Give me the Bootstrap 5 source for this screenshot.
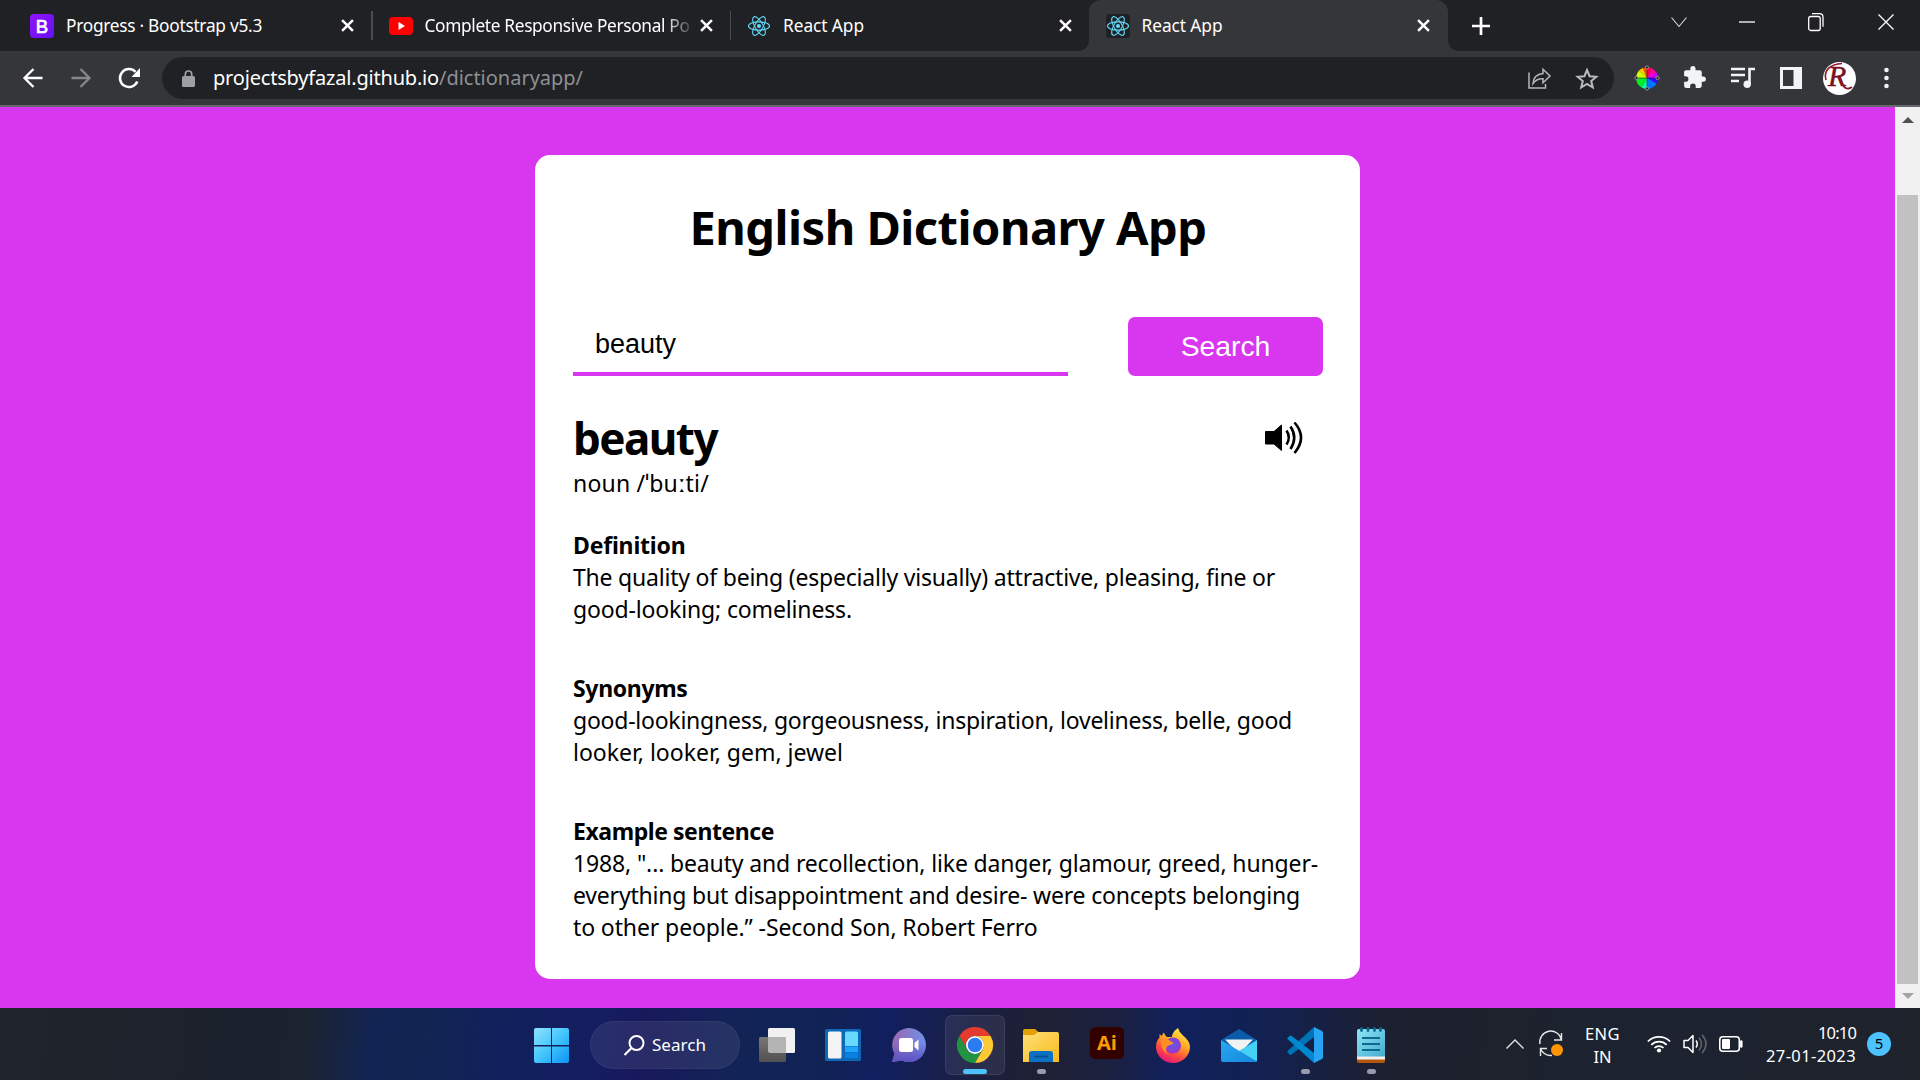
<!DOCTYPE html>
<html lang="en">
<head>
<meta charset="utf-8">
<meta name="viewport" content="width=device-width, initial-scale=1">
<title>React App</title>
<link href="https://cdn.jsdelivr.net/npm/bootstrap@5.3.0/dist/css/bootstrap.min.css" rel="stylesheet">
<style>
  :root { --pink: #d836ef; --ui: "Noto Sans", "Open Sans", sans-serif; }
  html, body { height: 100%; }
  body { font-family: var(--ui); color: #000; overflow: hidden; background: var(--pink); }
  svg { display: block; flex: none; overflow: visible; }
  .fit { display: inline-block; white-space: nowrap; }

  /* Browser chrome */
  .tabstrip { height: 51px; background: #202124; color: #fff; font-size: 17.3px; line-height: 51px; }
  .tab { height: 51px; flex: none; }
  .tab-sep { width: 1.5px; height: 29px; background: #4a4c50; flex: none; }
  .tab-active { background: #35363a; border-radius: 12px 12px 0 0; position: relative; }
  .tab-active::before, .tab-active::after { content: ""; position: absolute; bottom: 0; width: 10px; height: 10px; }
  .tab-active::before { left: -10px; background: radial-gradient(circle at 0 0, transparent 9.5px, #35363a 10px); }
  .tab-active::after { right: -10px; background: radial-gradient(circle at 100% 0, transparent 9.5px, #35363a 10px); }
  .tab-label { white-space: nowrap; }
  .fade-label { width: 274px; -webkit-mask-image: linear-gradient(90deg, #000 244px, transparent 274px); mask-image: linear-gradient(90deg, #000 244px, transparent 274px); }
  .toolbar { height: 56px; background: #35363a; border-bottom: 2px solid #67686c; }
  .omnibox { height: 42px; width: 1452px; margin-left: 22px; padding-left: 20px; padding-right: 16px; background: #202124; border-radius: 21px; font-size: 20px; line-height: 42px; color: #8d9095; }
  .omnibox .host { color: #fff; }

  /* Page */
  .viewport { height: 901px; }
  .scroller { width: 25px; background: #f1f1f1; }
  .thumb { width: 21px; height: 789px; background: #c1c1c1; }
  .page { padding-top: 48px; }
  .dict-card { width: 825px; height: 824px; border-radius: 15px; padding: 40px 37px 0 38px; background: #fff; }
  .app-title { font-size: 47px; font-weight: 700; line-height: 64px; margin-bottom: 58px; }
  .search-row { height: 59px; margin-bottom: 32px; }
  .word-input { width: 495px; border: 0; border-bottom: 4px solid var(--pink); padding: 0 0 0 22px; font: 27px "Liberation Sans", Arial, sans-serif; color: #000; outline: 0; background: transparent; }
  .search-btn { width: 195px; border-radius: 7px; background: var(--pink); color: #fff; font: 28.3px "Liberation Sans", Arial, sans-serif; }
  .word { font-size: 44px; font-weight: 700; line-height: 60px; margin-bottom: -1px; }
  .speaker { margin: 12px 20px 0 0; }
  .entry { font-size: 23px; line-height: 32px; }
  .entry .fit { display: table; }
  .entry-gap { margin-top: 47px; }
  .first-gap { margin-top: 30px; }

  /* Taskbar */
  .taskbar { height: 72px; color: #fff; background: linear-gradient(97deg, #20242b 0, #1c222d 12%, #1b2330 16%, #122453 19.5%, #122552 22%, #12205c 26%, #141e60 31%, #18195c 33.5%, #122456 39%, #112254 43%, #111f60 46%, #1b1f40 51%, #1f2033 54%, #1b2040 58%, #11205c 61%, #122150 66%, #1d2030 72%, #1d222c 78%, #1c2330 84%, #1e222b 100%); }
  .slot { width: 66px; height: 72px; padding-top: 2px; flex: none; position: relative; }
  .slot-active::before { content: ""; position: absolute; inset: 7px 3px 5px; border-radius: 7px; background: #ffffff12; border: 1px solid #ffffff14; }
  .slot svg { position: relative; }
  .run-dot, .run-bar { position: absolute; bottom: 6px; height: 5px; border-radius: 3px; width: 9px; background: #9a9cae; }
  .run-bar { width: 24px; background: #4cc2ff; }
  .pill { width: 150px; height: 48px; border-radius: 24px; background: #ffffff14; border: 1px solid #ffffff0c; margin: 2px 11px 0 21px; font-size: 17px; padding-left: 33px; }
  .tray { font-size: 16.5px; line-height: 23px; padding-right: 29px; }
  .notif { width: 24px; height: 24px; border-radius: 50%; background: #4cc2ff; color: #000; font-size: 15px; line-height: 23px; }
</style>
</head>
<body class="d-flex flex-column">

<svg width="0" height="0" class="position-absolute" aria-hidden="true">
  <defs>
    <symbol id="x" viewBox="0 0 12 12"><path d="M1 1l10 10M11 1L1 11" stroke="#fff" stroke-width="2.3" fill="none"/></symbol>
    <symbol id="react" viewBox="-12 -12 24 24"><g fill="none" stroke="#61dafb" stroke-width="1.1"><ellipse rx="10.5" ry="4.1"/><ellipse rx="10.5" ry="4.1" transform="rotate(60)"/><ellipse rx="10.5" ry="4.1" transform="rotate(120)"/></g><circle r="2.1" fill="#61dafb"/></symbol>
    <linearGradient id="gWin" gradientUnits="userSpaceOnUse" x1="0" y1="0" x2="35" y2="35"><stop stop-color="#8fe2ff"/><stop offset=".5" stop-color="#45c6fb"/><stop offset="1" stop-color="#0a93f5"/></linearGradient>
    <linearGradient id="gFold" x1="0" y1="0" x2="1" y2="1"><stop stop-color="#ffe07a"/><stop offset="1" stop-color="#f9b91a"/></linearGradient>
    <linearGradient id="gChat" x1="0" y1="0" x2="1" y2="0"><stop stop-color="#9a68ae"/><stop offset="1" stop-color="#7191ea"/></linearGradient>
    <linearGradient id="gChat2" x1="0" y1="0" x2="0" y2="1"><stop offset=".4" stop-color="#5a55c8" stop-opacity="0"/><stop offset="1" stop-color="#5a50c4"/></linearGradient>
    <linearGradient id="gFox" x1=".8" y1="0" x2=".3" y2="1"><stop stop-color="#fff04a"/><stop offset=".4" stop-color="#ffab24"/><stop offset=".7" stop-color="#ff4e3e"/><stop offset="1" stop-color="#e5127f"/></linearGradient>
    <radialGradient id="gGlobe" cx=".5" cy=".45" r=".6"><stop stop-color="#6359e8"/><stop offset="1" stop-color="#9a35c8"/></radialGradient>
    <linearGradient id="gNote" x1="0" y1="0" x2="1" y2="1"><stop stop-color="#8fe6f5"/><stop offset="1" stop-color="#43abd0"/></linearGradient>
    <linearGradient id="gGrey" x1="0" y1="0" x2="0" y2="1"><stop stop-color="#777"/><stop offset="1" stop-color="#505050"/></linearGradient>
    <linearGradient id="gBoot" x1="0" y1="0" x2="1" y2="1"><stop stop-color="#9013fe"/><stop offset="1" stop-color="#6610f2"/></linearGradient>
    <linearGradient id="gMail" x1="0" y1="0" x2="1" y2="1"><stop stop-color="#2ba9ef"/><stop offset="1" stop-color="#1387dd"/></linearGradient>
  </defs>
</svg>

<!-- Tab strip -->
<header class="tabstrip d-flex align-items-center flex-shrink-0">
  <div class="tab d-flex align-items-center" style="width:371px;padding-left:30px">
    <svg width="24" height="24"><rect width="24" height="24" rx="4" fill="url(#gBoot)"/><text x="12" y="18.600" text-anchor="middle" font-family="Liberation Sans" font-size="18.5" fill="#fff" stroke="#fff" stroke-width=".7">B</text></svg>
    <div class="tab-label ms-2 ps-1"><span class="fit" data-w="196">Progress · Bootstrap v5.3</span></div>
    <svg class="ms-auto" style="margin-right:17px" width="13" height="13"><use href="#x"/></svg>
  </div>
  <div class="tab-sep"></div>
  <div class="tab d-flex align-items-center" style="width:357px;padding-left:16px">
    <svg width="24" height="19"><rect y="1" width="24" height="18" rx="4" fill="#f00"/><path d="M9.500 6v8l6.500-4z" fill="#fff"/></svg>
    <div class="tab-label ms-2 ps-1 fade-label"><span class="fit" data-w="265">Complete Responsive Personal Po</span></div>
    <svg class="ms-auto" style="margin-right:17px" width="13" height="13"><use href="#x"/></svg>
  </div>
  <div class="tab-sep"></div>
  <div class="tab d-flex align-items-center" style="width:357.5px;padding-left:16px">
    <svg width="24" height="24"><use href="#react"/></svg>
    <div class="tab-label ms-2 ps-1"><span class="fit" data-w="81">React App</span></div>
    <svg class="ms-auto" style="margin-right:17px" width="13" height="13"><use href="#x"/></svg>
  </div>
  <div class="tab tab-active d-flex align-items-center" style="width:359.5px;padding-left:17px">
    <svg width="24" height="24"><rect width="24" height="24" rx="3" fill="#202124"/><use href="#react"/></svg>
    <div class="tab-label ms-2 ps-1"><span class="fit" data-w="81">React App</span></div>
    <svg class="ms-auto" style="margin-right:18px" width="13" height="13"><use href="#x"/></svg>
  </div>
  <svg style="margin-left:24px" width="18" height="18"><path d="M9 0v18M0 9h18" stroke="#fff" stroke-width="2.7"/></svg>
  <div class="d-flex align-items-center ms-auto pb-2 h-100">
    <svg width="16" height="10" style="margin-right:52px"><path d="M.5.5L8 9.500l7.500-9" fill="none" stroke="#ddd" stroke-width="1.1"/></svg>
    <svg width="16" height="2" style="margin-right:53px"><path d="M0 1h16" stroke="#fff" stroke-width="1.3"/></svg>
    <svg width="16" height="18" style="margin-right:54px"><g fill="none" stroke="#fff" stroke-width="1.3"><rect x=".7" y="3.5" width="11.500" height="14" rx="2"/><path d="M4 .7h7.500q3.500 0 3.500 3.500v9.500"/></g></svg>
    <svg width="16" height="18" style="margin-right:26px"><path d="M.5 1.500l15 15M15.500 1.500l-15 15" stroke="#fff" stroke-width="1.3"/></svg>
  </div>
</header>

<!-- Toolbar -->
<nav class="toolbar d-flex align-items-center flex-shrink-0">
  <svg style="margin-left:23px" width="20" height="20"><path d="M19.500 10H2M10.500 1L1.500 10l9 9" fill="none" stroke="#fff" stroke-width="2.3"/></svg>
  <svg style="margin-left:28px" width="20" height="20"><path d="M.5 10H18M9.500 1l9 9-9 9" fill="none" stroke="#85878b" stroke-width="2.3"/></svg>
  <svg style="margin-left:28px" width="21" height="20"><path d="M18.300 13.500A9 9 0 1 1 16.500 3.800" fill="none" stroke="#fff" stroke-width="2.500"/><path d="M21 0v9h-8.500z" fill="#fff"/></svg>
  <div class="omnibox d-flex align-items-center">
    <svg width="13" height="17"><rect y="6" width="13" height="11" rx="1.500" fill="#9aa0a6"/><path d="M3.300 6.500V4.200a3.200 3.200 0 0 1 6.400 0v2.300" fill="none" stroke="#9aa0a6" stroke-width="1.700"/></svg>
    <div style="margin-left:18px" class="d-flex"><span class="host fit" data-w="226">projectsbyfazal.github.io</span><span class="fit" data-w="144">/dictionaryapp/</span></div>
    <svg class="ms-auto" style="margin-right:25px" width="23" height="21"><g fill="none" stroke="#b5b7ba" stroke-width="1.500"><path d="M1 4.500V20h16.500v-4"/><path d="M5 15.500q.5-9 10-10V1.300l7 6.700-7 6.700v-4q-6.500-.4-10 4.800z" stroke-linejoin="miter"/></g></svg>
    <svg width="22" height="21"><path d="M11 2l2.600 6.200 6.700.5-5.100 4.300 1.600 6.500-5.800-3.500-5.800 3.500 1.600-6.500L1.700 8.700l6.700-.5z" fill="none" stroke="#b9bbbf" stroke-width="2"/></svg>
  </div>
  <svg style="margin-left:21px" width="24" height="24" viewBox="-12 -12 24 24">
    <path d="M0 0V-11A11 11 0 0 1 5.500-9.500z" fill="#ff004c"/><path d="M0 0L5-9.500A11 11 0 0 1 9.500-5z" fill="#f0a"/><path d="M0 0L9.500-5.500A11 11 0 0 1 10.800 0z" fill="#c0f"/><path d="M0 0H10.800A11 11 0 0 1 9.500 5.500z" fill="#30f"/><path d="M0 0L9.500 5.500A11 11 0 0 1 0 11z" fill="#07f"/><path d="M0 0V11A11 11 0 0 1-5.500 9.500z" fill="#0fb"/><path d="M0 0L-5.500 9.500A11 11 0 0 1-10.800 0z" fill="#0e2"/><path d="M0 0H-10.800A11 11 0 0 1-8-7.500z" fill="#cf0"/><path d="M0 0L-8-7.500A11 11 0 0 1-4-10z" fill="#fc0"/><path d="M0 0L-4-10A11 11 0 0 1 0-11z" fill="#f40"/>
    <path d="M0-10V10M-10 0H10" stroke="#222" stroke-width="1" opacity=".6"/>
    <g fill="#222" stroke="#aaa" stroke-width=".8"><circle cy="-10.500" r="1.600"/><circle cy="10.500" r="1.600"/><circle cx="-10.500" r="1.600"/><circle cx="10.500" r="1.600"/></g>
  </svg>
  <svg style="margin-left:24px" width="24" height="24" viewBox="0 0 24 24"><path transform="translate(-1 -1) scale(1.040)" d="M20.500 11H19V7c0-1.100-.9-2-2-2h-4V3.500a2.500 2.500 0 0 0-5 0V5H4c-1.100 0-2 .9-2 2v3.800h1.500a2.700 2.700 0 0 1 0 5.400H2V20c0 1.100.9 2 2 2h3.800v-1.500a2.700 2.700 0 0 1 5.400 0V22H17c1.100 0 2-.9 2-2v-4h1.500a2.500 2.500 0 0 0 0-5z" fill="#f1f3f4"/></svg>
  <svg style="margin-left:24px" width="24" height="22"><path d="M0 2h14M0 8h14M0 14h8" stroke="#f1f3f4" stroke-width="2.400"/><path d="M24 2h-5.500v15" stroke="#f1f3f4" stroke-width="2.600" fill="none"/><circle cx="16.200" cy="17.200" r="3.700" fill="#f1f3f4"/></svg>
  <svg style="margin-left:25px" width="22" height="22"><path d="M0 0h22v22H0zM3 3v16h10.500V3z" fill="#f1f3f4" fill-rule="evenodd"/></svg>
  <svg style="margin-left:21px" width="33" height="33"><circle cx="16.500" cy="16.500" r="16.500" fill="#fff"/><text x="5" y="24" font-family="Liberation Serif" font-style="italic" font-size="30" fill="#78101f" stroke="#78101f" stroke-width=".5">R</text><path d="M3 18C0 8 8 2 19 1.500M17 15c2 8 5 15 12 10" fill="none" stroke="#8e1528" stroke-width="1.700"/></svg>
  <svg style="margin-left:28px" width="5" height="24"><g fill="#f1f3f4"><circle cx="2.500" cy="4" r="2.300"/><circle cx="2.500" cy="12" r="2.300"/><circle cx="2.500" cy="20" r="2.300"/></g></svg>
</nav>

<!-- Page -->
<div class="viewport d-flex flex-shrink-0">
  <main class="page flex-grow-1 d-flex justify-content-center align-items-start">
    <section class="dict-card">
      <h1 class="app-title text-center"><span class="fit" data-w="517">English Dictionary App</span></h1>
      <form class="search-row d-flex justify-content-between">
        <input class="word-input" type="text" value="beauty" aria-label="Word">
        <button class="search-btn btn p-0" type="button">Search</button>
      </form>
      <div class="d-flex justify-content-between align-items-start">
        <h2 class="word mt-0"><span class="fit" data-w="144">beauty</span></h2>
        <svg class="speaker" width="38" height="35"><path d="M.5 11.500H9l7.500-6.500v25.500L9 24H.5z" stroke="#000" stroke-linejoin="round"/><g fill="none" stroke="#000" stroke-width="2.600"><path d="M21.500 10.500q4.600 7 0 14"/><path d="M25.500 6.500q7.400 11 0 22.500"/><path d="M29.500 2.500q13 15 0 30.500"/></g></svg>
      </div>
      <div class="entry"><span class="fit" data-w="136">noun /ˈbuːti/</span></div>
      <div class="entry first-gap">
        <strong class="fit" data-w="112.5">Definition</strong>
        <span class="fit" data-w="702">The quality of being (especially visually) attractive, pleasing, fine or</span>
        <span class="fit" data-w="279">good-looking; comeliness.</span>
      </div>
      <div class="entry entry-gap">
        <strong class="fit" data-w="114.5">Synonyms</strong>
        <span class="fit" data-w="719">good-lookingness, gorgeousness, inspiration, loveliness, belle, good</span>
        <span class="fit" data-w="270">looker, looker, gem, jewel</span>
      </div>
      <div class="entry entry-gap">
        <strong class="fit" data-w="201">Example sentence</strong>
        <span class="fit" data-w="745">1988, "... beauty and recollection, like danger, glamour, greed, hunger-</span>
        <span class="fit" data-w="727">everything but disappointment and desire- were concepts belonging</span>
        <span class="fit" data-w="464.5">to other people.” -Second Son, Robert Ferro</span>
      </div>
    </section>
  </main>
  <aside class="scroller d-flex flex-column align-items-center justify-content-between">
    <svg style="margin-top:10px" width="12" height="6"><path d="M0 6L6 0l6 6z" fill="#505050"/></svg>
    <div class="thumb mt-auto"></div>
    <svg style="margin:9px 0" width="12" height="6"><path d="M0 0l6 6 6-6z" fill="#a3a3a3"/></svg>
  </aside>
</div>

<!-- Taskbar -->
<footer class="taskbar d-flex align-items-center flex-shrink-0">
  <div class="d-flex align-items-center" style="margin-left:533px">
    <svg style="margin:2px 0 0 1px" width="35" height="35"><g fill="url(#gWin)"><path d="M2 0h15v17H0V2q0-2 2-2zM18 0h15q2 0 2 2v15H18zM0 18.500h17V35H2q-2 0-2-2zM18 18.500h17V33q0 2-2 2H18z"/></g></svg>
    <div class="pill d-flex align-items-center">
      <svg width="21" height="21"><circle cx="12.500" cy="8" r="7" fill="none" stroke="#fff" stroke-width="2"/><path d="M7.500 13l-7 7" stroke="#fff" stroke-width="2.200"/></svg>
      <span class="fit" style="margin-left:7px" data-w="54">Search</span>
    </div>
    <div class="slot d-flex align-items-center justify-content-center" style="margin-left:-7px"><svg width="36" height="34"><rect x="9" width="27" height="25" rx="1.500" fill="#f1f1f1"/><rect y="9" width="27" height="25" rx="1.500" fill="url(#gGrey)"/><path d="M9 9h18v16H10.500L9 23.500z" fill="#b4b4b4"/></svg></div>
    <div class="slot d-flex align-items-center justify-content-center"><svg width="36" height="32"><rect width="36" height="32" rx="1.500" fill="#0d68b8"/><rect x="3" y="2.500" width="13.500" height="27" rx="1.500" fill="#f3f3f3"/><path d="M20 4q0-1.500 1.500-1.500h10q1.500 0 1.500 1.500v13H20z" fill="#69d8ff"/><path d="M20 17.500h13V23H20z" fill="#1ea4fb"/><path d="M20 23.500h13V29H20z" fill="#0a7fe4"/></svg></div>
    <div class="slot d-flex align-items-center justify-content-center"><svg width="34" height="34"><path d="M17 0a17 17 0 1 1-7 32.500L0 34l2.500-8.500A17 17 0 0 1 17 0z" fill="url(#gChat)"/><path d="M17 0a17 17 0 1 1-7 32.500L0 34l2.500-8.500A17 17 0 0 1 17 0z" fill="url(#gChat2)"/><rect x="7" y="10" width="14" height="14" rx="2.500" fill="#fff"/><path d="M22.500 15l4-3.500v11l-4-3.500z" fill="#fff"/></svg></div>
    <div class="slot slot-active d-flex align-items-center justify-content-center">
      <svg width="36" height="36" viewBox="-18 -18 36 36"><path d="M-15.600-9A18 18 0 0 1 15.600-9L0-9A9 9 0 0 0-7.800 4.500z" fill="#e33b2e"/><path d="M-15.600-9A18 18 0 0 0 0 18L7.800 4.500A9 9 0 0 1-7.800 4.500z" fill="#229342"/><path d="M15.600-9A18 18 0 0 1 0 18L7.800 4.500A9 9 0 0 0 0-9z" fill="#fcc934"/><circle r="9" fill="#fff"/><circle r="7.300" fill="#2b7cf0"/></svg>
      <span class="run-bar"></span></div>
    <div class="slot d-flex align-items-center justify-content-center">
      <svg width="36" height="33"><path d="M0 2q0-2 2-2h10l4 3.500H33V12H0z" fill="#e3a008"/><path d="M0 6h11l4-3h19q2 0 2 2v28H0z" fill="url(#gFold)"/><path d="M6 33v-8q0-3 3-3h18q3 0 3 3v8z" fill="#0c70c4"/><path d="M11 27.500h14" stroke="#084f8a" stroke-width="1.800"/></svg>
      <span class="run-dot"></span></div>
    <div class="slot d-flex align-items-center justify-content-center pb-1"><svg width="34" height="32"><rect width="34" height="32" rx="5.500" fill="#300"/><text x="17" y="22.500" text-anchor="middle" font-family="Open Sans" font-weight="700" font-size="20" fill="#ff9a00">Ai</text></svg></div>
    <div class="slot d-flex align-items-center justify-content-center"><svg width="34" height="35"><path d="M22 0q1 4 5 7.500Q34 13 34 19a17 16 0 0 1-34 0Q0 13 3.500 9.500V6Q5 7.500 6 8q0-2 2-3.500.5 3 3 4.500h5Q16 4 22 0z" fill="url(#gFox)"/><circle cx="17" cy="17.500" r="8" fill="url(#gGlobe)"/><path d="M5 12q6-3 11 2 2 .5 1 2-4 .5-6 2.500-3 5 2 8-8-2-8-14.500z" fill="#ff8f24"/></svg></div>
    <div class="slot d-flex align-items-center justify-content-center"><svg width="36" height="33"><path d="M0 11L18 0l18 11-18 12z" fill="#0a5cab"/><path d="M4 10.500h28L18 25z" fill="#f2f2f2"/><path d="M36 11v20q0 2-2 2L18 22z" fill="#45d0f5"/><path d="M0 11l36 21.500q-1 .5-2 .5H2q-2 0-2-2z" fill="url(#gMail)"/></svg></div>
    <div class="slot d-flex align-items-center justify-content-center">
      <svg width="36" height="36"><path d="M0 24.500l2.500 3q1 .8 2.200 0L27 10V0z" fill="#0072b7"/><path d="M0 11.500L2.500 9q1-.8 2.200 0L27 26v10z" fill="#0088d1"/><path d="M27 0l8 4q1 .5 1 2v24q0 1.500-1 2l-8 4z" fill="#28a4f2"/></svg>
      <span class="run-dot"></span></div>
    <div class="slot d-flex align-items-center justify-content-center">
      <svg width="28" height="36"><path d="M0 30h28v4q0 2-2 2H2q-2 0-2-2z" fill="#b4570d"/><path d="M0 28h28v4.500H0z" fill="#f0f0f0"/><path d="M0 4q0-2 2-2h24q2 0 2 2v25.500H0z" fill="url(#gNote)"/><path d="M5 11h18M5 17h18M5 23h18" stroke="#0b6a8e" stroke-width="1.900"/><path d="M4.500 1.500v2M11 1.500v2M17.500 1.500v2M23.500 1.500v2" stroke="#0b6a8e" stroke-width="2.800" stroke-linecap="round"/></svg>
      <span class="run-dot"></span></div>
  </div>
  <div class="tray d-flex align-items-center ms-auto">
    <svg width="18" height="10"><path d="M.5 9.500L9 1l8.500 8.500" fill="none" stroke="#e6e6e6" stroke-width="1.400"/></svg>
    <svg style="margin-left:15px" width="24" height="24"><g fill="none" stroke="#e6e6e6" stroke-width="1.400"><path d="M1 12A10.700 10.700 0 0 1 22.500 8M22.500 1v7H15M13 23.500A12 12 0 0 1 1.500 17M1.500 24v-7.500H8"/></g><circle cx="18" cy="18" r="6" fill="#ff9500"/></svg>
    <div class="text-center pt-1" style="margin-left:22px;width:35px;margin-top:-2px"><span class="fit" data-w="35">ENG</span><br><span class="fit" data-w="18">IN</span></div>
    <svg style="margin-left:27px" width="24" height="18"><g fill="none" stroke="#fff" stroke-width="1.700"><path d="M.8 6.500a16 16 0 0 1 22.400 0M4.300 9.800a11 11 0 0 1 15.400 0M7.500 13a6.400 6.400 0 0 1 9 0"/></g><circle cx="12" cy="15.500" r="2.100" fill="#fff"/></svg>
    <svg style="margin-left:12px" width="24" height="20"><g fill="none" stroke="#fff" stroke-width="1.500"><path d="M1 6.500h4l5-5v17l-5-5H1z" stroke-linejoin="round"/><path d="M13 6.500q2.500 3.500 0 7"/><path d="M16 3.500q5 6.500 0 13M19 .8q8 9.200 0 18.400" stroke="#60646c"/></g></svg>
    <svg style="margin-left:12px" width="24" height="16"><rect x=".8" y=".8" width="19.500" height="14.400" rx="3" fill="none" stroke="#fff" stroke-width="1.600"/><rect x="3" y="3" width="8" height="10" rx="1" fill="#fff"/><path d="M22.300 5.500v5" stroke="#fff" stroke-width="2.500" stroke-linecap="round"/></svg>
    <div class="text-end" style="margin-left:22px;width:91px"><span class="fit" data-w="38">10:10</span><br><span class="fit" data-w="90">27-01-2023</span></div>
    <div class="notif text-center" style="margin-left:11px">5</div>
  </div>
</footer>

<script src="https://cdn.jsdelivr.net/npm/bootstrap@5.3.0/dist/js/bootstrap.bundle.min.js"></script>
<script>
  // Track each label so that it takes exactly its designed width.
  document.querySelectorAll('.fit').forEach(function (el) {
    var diff = parseFloat(el.dataset.w) - el.getBoundingClientRect().width;
    el.style.letterSpacing = (diff / el.textContent.length).toFixed(3) + 'px';
  });
</script>
</body>
</html>
